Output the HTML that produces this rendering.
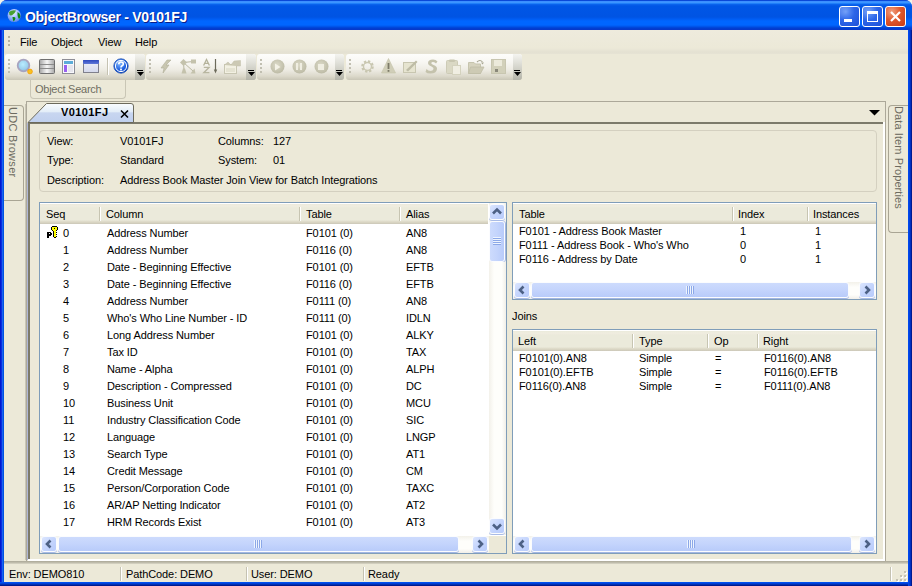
<!DOCTYPE html><html><head><meta charset="utf-8"><style>
*{box-sizing:border-box;margin:0;padding:0}
html,body{width:912px;height:586px;overflow:hidden;background:#f2f4ea}
body{font-family:"Liberation Sans",sans-serif;font-size:11px;color:#000;position:relative}
.a{position:absolute}
.t{position:absolute;white-space:nowrap;line-height:13px;font-size:11px;letter-spacing:-0.1px}
svg{position:absolute;overflow:visible}
</style></head><body>
<div class="a" style="left:0px;top:0px;width:912px;height:586px;background:#0831d9;border-radius:7px 7px 0 0"></div>
<div class="a" style="left:0px;top:0px;width:912px;height:30px;border-radius:7px 7px 0 0;background:linear-gradient(to bottom,#0a48d8 0px,#0a48d8 1px,#3a8cff 1px,#3d95ff 2.5px,#2080fa 3.5px,#0a62ec 4.5px,#0056e6 6px,#0054e3 17px,#005cf2 19px,#0066ff 21px,#0066ff 25px,#0054ea 26.5px,#0040d2 28px,#0836c8 30px)"></div>
<div class="a" style="left:0px;top:30px;width:4px;height:552px;background:linear-gradient(to right,#0019cf 0,#0019cf 1px,#0a2ee0 1px,#0a2ee0 2px,#1864f0 2px,#1864f0 3px,#0052e2 3px)"></div>
<div class="a" style="left:908px;top:30px;width:4px;height:556px;background:linear-gradient(to right,#0048ee 0,#0048ee 1px,#0040dc 1px,#0040dc 2px,#0030c0 2px,#0030c0 3px,#001a90 3px)"></div>
<div class="a" style="left:0px;top:582px;width:908px;height:4px;background:linear-gradient(to bottom,#0050ee 0,#0050ee 1px,#0040d8 1px,#0040d8 2px,#0030b0 2px,#0030b0 3px,#001a90 3px)"></div>
<svg style="left:7px;top:8px" width="15" height="15" viewBox="0 0 15 15"><defs><radialGradient id="gl" cx="0.45" cy="0.3" r="0.75"><stop offset="0" stop-color="#f0f8ff"/><stop offset="0.45" stop-color="#a8c0ff"/><stop offset="1" stop-color="#5080e8"/></radialGradient></defs><circle cx="7.2" cy="7.5" r="6.6" fill="url(#gl)"/><path d="M2 4Q5 1.5 9 2.5Q8 5 6 6.5Q4 8 2.5 7Z" fill="#48a030"/><path d="M10.5 4Q13 5 13.5 8Q13 10.5 12 11Q10.5 9 10.5 7Z" fill="#108810"/><path d="M5.5 9Q8 8.5 8.5 10Q8 13 6.5 13.5Q5.5 11 5.5 9Z" fill="#108810"/></svg>
<span class="t " style="left:25px;top:11px;color:#fff;font-weight:bold;font-size:14px;letter-spacing:-0.3px;text-shadow:1px 1px 0 #0a1e8a">ObjectBrowser - V0101FJ</span>
<div class="a" style="left:839px;top:6px;width:21px;height:21px;border:1px solid #fff;border-radius:3px;background:linear-gradient(135deg,#ffffff22,transparent 40%),radial-gradient(circle at 30% 25%,#6d9cf8 0%,#2d66e8 45%,#1d50d8 100%)"></div>
<div class="a" style="left:862px;top:6px;width:21px;height:21px;border:1px solid #fff;border-radius:3px;background:linear-gradient(135deg,#ffffff22,transparent 40%),radial-gradient(circle at 30% 25%,#6d9cf8 0%,#2d66e8 45%,#1d50d8 100%)"></div>
<div class="a" style="left:885px;top:6px;width:21px;height:21px;border:1px solid #fff;border-radius:3px;background:radial-gradient(circle at 30% 25%,#f0a080 0%,#e0582c 45%,#c83a14 100%)"></div>
<div class="a" style="left:844px;top:19px;width:8px;height:3px;background:#fff"></div>
<div class="a" style="left:867px;top:11px;width:11px;height:11px;border:1px solid #fff;border-top:3px solid #fff"></div>
<svg style="left:889px;top:10px" width="13" height="13" viewBox="0 0 13 13"><path d="M2 2L11 11M11 2L2 11" stroke="#fff" stroke-width="2.2"/></svg>
<div class="a" style="left:4px;top:30px;width:904px;height:552px;background:#ece9d8"></div>
<div class="a" style="left:4px;top:30px;width:904px;height:24px;background:linear-gradient(to bottom,#eeebdd 0px,#ece9d8 18px,#e4e1d2 22px,#e6e3d5 24px)"></div>
<div class="a" style="left:8px;top:36px;width:2px;height:10px;background:repeating-linear-gradient(to bottom,#b5b2a2 0 2px,transparent 2px 4px)"></div>
<span class="t " style="left:20px;top:36px;">File</span>
<span class="t " style="left:51px;top:36px;">Object</span>
<span class="t " style="left:98px;top:36px;">View</span>
<span class="t " style="left:135px;top:36px;">Help</span>
<div class="a" style="left:5px;top:54px;width:140px;height:26px;border-radius:3px;background:linear-gradient(to bottom,#fdfdfb 0%,#f8f7f3 30%,#eeece4 60%,#dcd9cb 85%,#c9c6b6 100%)"></div>
<div class="a" style="left:8px;top:59px;width:2px;height:14px;background:repeating-linear-gradient(to bottom,#c1bfb1 0 2px,transparent 2px 4px)"></div>
<div class="a" style="left:135px;top:54px;width:10px;height:26px;border-radius:0 3px 3px 0;background:linear-gradient(to bottom,#f4f4f0 0%,#dcdcd4 40%,#b4b4a8 100%)"></div>
<div class="a" style="left:137px;top:70px;width:6px;height:1px;background:#000"></div>
<svg style="left:137px;top:72px" width="7" height="4"><path d="M0 0H7L3.5 4Z" fill="#000"/></svg>
<div class="a" style="left:146px;top:54px;width:110px;height:26px;border-radius:3px;background:linear-gradient(to bottom,#fdfdfb 0%,#f8f7f3 30%,#eeece4 60%,#dcd9cb 85%,#c9c6b6 100%)"></div>
<div class="a" style="left:149px;top:59px;width:2px;height:14px;background:repeating-linear-gradient(to bottom,#c1bfb1 0 2px,transparent 2px 4px)"></div>
<div class="a" style="left:246px;top:54px;width:10px;height:26px;border-radius:0 3px 3px 0;background:linear-gradient(to bottom,#f4f4f0 0%,#dcdcd4 40%,#b4b4a8 100%)"></div>
<div class="a" style="left:248px;top:70px;width:6px;height:1px;background:#000"></div>
<svg style="left:248px;top:72px" width="7" height="4"><path d="M0 0H7L3.5 4Z" fill="#000"/></svg>
<div class="a" style="left:257px;top:54px;width:87px;height:26px;border-radius:3px;background:linear-gradient(to bottom,#fdfdfb 0%,#f8f7f3 30%,#eeece4 60%,#dcd9cb 85%,#c9c6b6 100%)"></div>
<div class="a" style="left:260px;top:59px;width:2px;height:14px;background:repeating-linear-gradient(to bottom,#c1bfb1 0 2px,transparent 2px 4px)"></div>
<div class="a" style="left:335px;top:54px;width:9px;height:26px;border-radius:0 3px 3px 0;background:linear-gradient(to bottom,#f4f4f0 0%,#dcdcd4 40%,#b4b4a8 100%)"></div>
<div class="a" style="left:336px;top:70px;width:6px;height:1px;background:#000"></div>
<svg style="left:336px;top:72px" width="7" height="4"><path d="M0 0H7L3.5 4Z" fill="#000"/></svg>
<div class="a" style="left:346px;top:54px;width:176px;height:26px;border-radius:3px;background:linear-gradient(to bottom,#fdfdfb 0%,#f8f7f3 30%,#eeece4 60%,#dcd9cb 85%,#c9c6b6 100%)"></div>
<div class="a" style="left:349px;top:59px;width:2px;height:14px;background:repeating-linear-gradient(to bottom,#c1bfb1 0 2px,transparent 2px 4px)"></div>
<div class="a" style="left:513px;top:54px;width:9px;height:26px;border-radius:0 3px 3px 0;background:linear-gradient(to bottom,#f4f4f0 0%,#dcdcd4 40%,#b4b4a8 100%)"></div>
<div class="a" style="left:514px;top:70px;width:6px;height:1px;background:#000"></div>
<svg style="left:514px;top:72px" width="7" height="4"><path d="M0 0H7L3.5 4Z" fill="#000"/></svg>

<svg style="left:16px;top:58px" width="17" height="17" viewBox="0 0 17 17">
 <defs><radialGradient id="lens" cx="0.45" cy="0.4" r="0.6"><stop offset="0" stop-color="#b8ecff"/><stop offset="0.7" stop-color="#9cd0ec"/><stop offset="1" stop-color="#88b8dc"/></radialGradient></defs>
 <circle cx="7.5" cy="7.5" r="5.8" fill="url(#lens)" stroke="#a8a4c0" stroke-width="1.8"/>
 <circle cx="14" cy="13.5" r="2.4" fill="#f8c020" stroke="#f09800" stroke-width="0.7"/>
</svg>
<svg style="left:39px;top:59px" width="16" height="16" viewBox="0 0 16 16">
 <defs><linearGradient id="db" x1="0" x2="1"><stop offset="0" stop-color="#a4a4a4"/><stop offset="0.5" stop-color="#f6f6f6"/><stop offset="1" stop-color="#a8a8a8"/></linearGradient></defs>
 <rect x="0.5" y="0.5" width="15" height="14" rx="1" fill="url(#db)" stroke="#707070"/>
 <path d="M1 5.5H15M1 9.5H15" stroke="#8a8a8a" stroke-width="1"/>
</svg>
<svg style="left:62px;top:59px" width="13" height="15" viewBox="0 0 13 15">
 <rect x="0.5" y="0.5" width="12" height="14" fill="#f8f8fc" stroke="#8e8e96"/>
 <rect x="2" y="2" width="9" height="3" fill="#5cacd8"/>
 <rect x="2" y="6" width="3" height="7" fill="#9860f0"/>
 <rect x="6" y="6" width="5" height="7" fill="#e6e6ee"/>
</svg>
<svg style="left:83px;top:60px" width="16" height="13" viewBox="0 0 16 13">
 <defs><linearGradient id="wn" x1="0" y1="0" x2="0" y2="1"><stop offset="0" stop-color="#eef0f8"/><stop offset="1" stop-color="#d4d8ec"/></linearGradient>
 <linearGradient id="wt" x1="0" y1="0" x2="0" y2="1"><stop offset="0" stop-color="#2c48c0"/><stop offset="1" stop-color="#6078d8"/></linearGradient></defs>
 <rect x="0.5" y="0.5" width="15" height="12" fill="url(#wn)" stroke="#80808c"/>
 <rect x="0" y="0" width="16" height="4" rx="1" fill="url(#wt)"/>
</svg>
<div class="a" style="left:107px;top:58px;width:1px;height:17px;background:#c5c2b2;box-shadow:1px 0 0 #fff"></div>
<svg style="left:113px;top:58px" width="16" height="16" viewBox="0 0 16 16">
 <defs><radialGradient id="hp" cx="0.4" cy="0.3" r="0.8"><stop offset="0" stop-color="#8cc0ff"/><stop offset="0.6" stop-color="#1a5ce0"/><stop offset="1" stop-color="#0a3cb0"/></radialGradient></defs>
 <circle cx="8" cy="8" r="7.2" fill="url(#hp)" stroke="#2050b0" stroke-width="0.8"/>
 <circle cx="8" cy="8" r="5.6" fill="none" stroke="#fff" stroke-width="1"/>
 <path d="M5.8 6.2Q5.8 4 8 4Q10.3 4 10.3 6Q10.3 7.3 8.8 8Q8 8.5 8 9.6" fill="none" stroke="#fff" stroke-width="1.7"/>
 <rect x="7.1" y="10.6" width="1.8" height="1.8" fill="#fff"/>
</svg>
<svg style="left:160px;top:60px" width="12" height="13" viewBox="0 0 12 13">
 <path d="M7 0L11 0L6 5L9 5L3 13L4 8L1 8Z" fill="#c8c6b0" stroke="#b0ae98" stroke-width="0.6"/>
</svg>
<svg style="left:180px;top:59px" width="16" height="15" viewBox="0 0 16 15">
 <path d="M3.5 3.5L13 2.5M3.5 3.5L13 12M3.5 3.5L4 11" stroke="#bab8a2" stroke-width="1"/>
 <path d="M3.5 0L7 3.5L3.5 7L0 3.5Z" fill="#c4c2ac"/>
 <rect x="11" y="0.5" width="5" height="4" fill="#c4c2ac"/>
 <path d="M1.5 14.5H6.5L5 9.5H3Z" fill="#c4c2ac"/>
 <path d="M10.5 14.5H15.5L14.5 9.5Z" fill="#c4c2ac"/>
</svg>
<svg style="left:203px;top:59px" width="15" height="16" viewBox="0 0 15 16">
 <path d="M0.6 6.5L3.5 0.5L6.4 6.5M1.8 4.3H5.2" fill="none" stroke="#b4b29a" stroke-width="1.3"/>
 <path d="M0.8 8.3H6.2L0.8 13.7H6.4" fill="none" stroke="#b8b6a0" stroke-width="1.3"/>
 <path d="M12.5 0V11.5" stroke="#6c6a5a" stroke-width="1.2"/><path d="M10.8 10.5H14.2L12.5 14.5Z" fill="#6c6a5a"/>
</svg>
<svg style="left:224px;top:60px" width="17" height="14" viewBox="0 0 17 14">
 <rect x="0.5" y="4.5" width="12" height="9" fill="#f2f0e2" stroke="#c8c6b2"/>
 <path d="M0.5 5L4 2L7 5L10 1L16.5 0.5V6L12.5 6" fill="#ccc9b4" stroke="#c0bea8" stroke-width="0.5"/>
 <path d="M2 9H11M2 11H11" stroke="#d0ceba" stroke-width="0.8"/>
</svg>
<svg style="left:270px;top:59px" width="15" height="15" viewBox="0 0 15 15"><defs><radialGradient id="pb277" cx="0.45" cy="0.4" r="0.7"><stop offset="0" stop-color="#dcdac8"/><stop offset="1" stop-color="#b8b6a0"/></radialGradient></defs><circle cx="7.5" cy="7.5" r="7" fill="url(#pb277)"/></svg><svg style="left:292px;top:59px" width="15" height="15" viewBox="0 0 15 15"><defs><radialGradient id="pb299" cx="0.45" cy="0.4" r="0.7"><stop offset="0" stop-color="#dcdac8"/><stop offset="1" stop-color="#b8b6a0"/></radialGradient></defs><circle cx="7.5" cy="7.5" r="7" fill="url(#pb299)"/></svg><svg style="left:314px;top:59px" width="15" height="15" viewBox="0 0 15 15"><defs><radialGradient id="pb321" cx="0.45" cy="0.4" r="0.7"><stop offset="0" stop-color="#dcdac8"/><stop offset="1" stop-color="#b8b6a0"/></radialGradient></defs><circle cx="7.5" cy="7.5" r="7" fill="url(#pb321)"/></svg>
<svg style="left:274px;top:63px" width="7" height="8"><path d="M1 0.5L6.5 4L1 7.5Z" fill="#f4f2e6"/></svg>
<div class="a" style="left:296px;top:63px;width:2px;height:7px;background:#f0eee2"></div>
<div class="a" style="left:300px;top:63px;width:2px;height:7px;background:#f0eee2"></div>
<div class="a" style="left:318px;top:64px;width:6px;height:6px;background:#f0eee2"></div>
<svg style="left:360px;top:59px" width="15" height="15" viewBox="0 0 15 15">
 <circle cx="7.5" cy="7.5" r="5" fill="none" stroke="#c8c6b0" stroke-width="2.6" stroke-dasharray="2.2 1.7"/>
 <circle cx="7.5" cy="7.5" r="4" fill="none" stroke="#cac8b2" stroke-width="1.4"/>
</svg>
<svg style="left:381px;top:58px" width="15" height="16" viewBox="0 0 15 16">
 <path d="M7.5 0.5L14.5 15H0.5Z" fill="#d0ceb8" stroke="#c4c2aa" stroke-width="0.6"/>
 <rect x="6.6" y="5" width="1.8" height="6" fill="#7c7a68"/><rect x="6.6" y="12" width="1.8" height="1.8" fill="#7c7a68"/>
</svg>
<svg style="left:403px;top:59px" width="15" height="15" viewBox="0 0 15 15">
 <rect x="0.5" y="3.5" width="12" height="10" fill="#e6e4d0" stroke="#c8c6b0"/>
 <path d="M3 11L13 1.5L14.5 3L5 12.5Z" fill="#bebca6"/>
</svg>
<svg style="left:425px;top:59px" width="14" height="15" viewBox="0 0 14 15">
 <path d="M12.5 2.5Q11 0.5 8 0.5Q3 0.5 3 4Q3 6 6.5 7.5Q9 8.5 8.5 10Q8 12 5.5 12Q3 12 1.5 10L0.5 13Q2 14.5 5.5 14.5Q11.5 14.5 12 10Q12.3 7.5 8.5 6Q6 5 6.3 4Q6.5 3 8 3Q10 3 11 4.5Z" fill="#c4c2ac"/>
</svg>
<svg style="left:446px;top:59px" width="16" height="16" viewBox="0 0 16 16">
 <rect x="0.5" y="1.5" width="11" height="13" rx="1" fill="#dad8c4" stroke="#cdcbb6"/>
 <rect x="3" y="0.5" width="6" height="2.5" rx="1" fill="#c8c6b0"/>
 <rect x="6.5" y="6.5" width="8" height="9" fill="#f0eee2" stroke="#d4d2be"/>
</svg>
<svg style="left:468px;top:59px" width="17" height="15" viewBox="0 0 17 15">
 <path d="M0.5 3.5H6L7.5 5H12.5V14.5H0.5Z" fill="#d6d3be" stroke="#c6c4ae"/>
 <path d="M2.5 8H16L12.5 14.5H0.5Z" fill="#cdcab4" stroke="#bfbca6" stroke-width="0.8"/>
 <path d="M9 3Q12 0 14.5 3" fill="none" stroke="#a8a692" stroke-width="1.1"/><path d="M13 3.5H16L14.5 5.5Z" fill="#a8a692"/>
</svg>
<svg style="left:491px;top:59px" width="15" height="15" viewBox="0 0 15 15">
 <rect x="0.5" y="0.5" width="14" height="14" fill="#d2d0ba" stroke="#c8c6b0"/>
 <rect x="3" y="1" width="8" height="6" fill="#eceadb"/>
 <rect x="4" y="10" width="3" height="3" fill="#8a887a"/>
</svg>

<div class="a" style="left:30px;top:80px;width:96px;height:19px;border:1px solid #c9c6b5;border-top:none;border-radius:0 0 4px 4px;background:#ece9d8"></div>
<span class="t " style="left:35px;top:83px;color:#6f6d62;letter-spacing:-0.25px">Object Search</span>
<div class="a" style="left:4px;top:105px;width:20px;height:96px;border:1px solid #a9a594;border-left:none;border-radius:0 4px 4px 0;background:#ece9d8"></div>
<div class="a" style="left:4px;top:104px;width:22px;height:456px;border-right:1px solid #c9c6b6"></div>
<div class="a" style="left:6px;top:107px;width:13px;height:80px"><span class="t" style="left:0;top:0;color:#6d6b60;letter-spacing:0.3px;transform-origin:0 0;transform:translate(13px,0) rotate(90deg)">UDC Browser</span></div>
<div class="a" style="left:888px;top:105px;width:20px;height:128px;border:1px solid #a9a594;border-right:none;border-radius:4px 0 0 4px;background:#ece9d8"></div>
<div class="a" style="left:885px;top:101px;width:1px;height:461px;background:#aca899"></div>
<div class="a" style="left:892px;top:106px;width:13px;height:120px"><span class="t" style="left:0;top:0;color:#6d6b60;letter-spacing:0.1px;transform-origin:0 0;transform:translate(13px,0) rotate(90deg)">Data Item Properties</span></div>
<div class="a" style="left:26px;top:101px;width:860px;height:461px;border-top:1px solid #aca899;border-left:1px solid #aca899;border-right:1px solid #aca899;background:#ece9d8"></div>
<div class="a" style="left:28px;top:122px;width:857px;height:2px;background:#7c7a6a"></div>
<div class="a" style="left:28px;top:122px;width:2px;height:438px;background:#7c7a6a"></div>
<div class="a" style="left:27px;top:123px;width:1px;height:437px;background:#b0b8d8"></div>
<div class="a" style="left:883px;top:122px;width:2px;height:438px;background:#fff"></div>
<div class="a" style="left:28px;top:559px;width:857px;height:2px;background:#fff"></div>
<div class="a" style="left:30px;top:124px;width:853px;height:435px;background:#ece9d8"></div>
<svg style="left:27px;top:102px" width="108" height="22" viewBox="0 0 108 22">
<defs><linearGradient id="tabg" x1="0" y1="0" x2="0" y2="1"><stop offset="0" stop-color="#fafdff"/><stop offset="0.42" stop-color="#e4eef8"/><stop offset="0.5" stop-color="#c8d6f0"/><stop offset="1" stop-color="#c0d0ee"/></linearGradient></defs>
<path d="M1 20.5L19.5 1.5H104Q106.5 1.5 106.5 4V20.5Z" fill="url(#tabg)" stroke="#6c6a5c" stroke-width="1"/>
</svg>
<span class="t " style="left:61px;top:106px;font-weight:bold;font-size:11px;letter-spacing:0.4px">V0101FJ</span>
<svg style="left:120px;top:110px" width="9" height="8" viewBox="0 0 9 8"><path d="M1 0.5L8 7.5M8 0.5L1 7.5" stroke="#000" stroke-width="1.6"/></svg>
<svg style="left:869px;top:110px" width="11" height="6"><path d="M0 0H11L5.5 5.5Z" fill="#000"/></svg>
<div class="a" style="left:39px;top:130px;width:838px;height:62px;border:1px solid #d4d0c0;border-radius:4px;background:#ece9d8"></div>
<span class="t " style="left:47px;top:135px;">View:</span>
<span class="t " style="left:47px;top:154px;">Type:</span>
<span class="t " style="left:47px;top:174px;">Description:</span>
<span class="t " style="left:120px;top:135px;">V0101FJ</span>
<span class="t " style="left:120px;top:154px;">Standard</span>
<span class="t " style="left:120px;top:174px;">Address Book Master Join View for Batch Integrations</span>
<span class="t " style="left:218px;top:135px;">Columns:</span>
<span class="t " style="left:273px;top:135px;">127</span>
<span class="t " style="left:218px;top:154px;">System:</span>
<span class="t " style="left:273px;top:154px;">01</span>
<div class="a" style="left:39px;top:202px;width:468px;height:352px;background:#fff;border:1px solid #7f9db9"></div>
<div class="a" style="left:40px;top:203px;width:448px;height:21px;background:linear-gradient(to bottom,#ffffff 0px,#ffffff 1px,#ebeadb 1px,#f0ede0 3px,#ebeadb 5px,#ebeadb 17px,#e2dfce 18px,#d8d4c2 19.5px,#cbc7b8 21px)"></div>
<div class="a" style="left:99px;top:207px;width:1px;height:14px;background:#c7c5b2;box-shadow:1px 0 0 #fff"></div>
<div class="a" style="left:299px;top:207px;width:1px;height:14px;background:#c7c5b2;box-shadow:1px 0 0 #fff"></div>
<div class="a" style="left:399px;top:207px;width:1px;height:14px;background:#c7c5b2;box-shadow:1px 0 0 #fff"></div>
<span class="t " style="left:46px;top:208px;">Seq</span>
<span class="t " style="left:106px;top:208px;">Column</span>
<span class="t " style="left:306px;top:208px;">Table</span>
<span class="t " style="left:406px;top:208px;">Alias</span>
<div class="a" style="left:40px;top:224px;width:449px;height:311px;overflow:hidden">
<span class="t " style="left:23px;top:3px;">0</span>
<span class="t " style="left:67px;top:3px;">Address Number</span>
<span class="t " style="left:266px;top:3px;">F0101 (0)</span>
<span class="t " style="left:366px;top:3px;">AN8</span>
<span class="t " style="left:23px;top:20px;">1</span>
<span class="t " style="left:67px;top:20px;">Address Number</span>
<span class="t " style="left:266px;top:20px;">F0116 (0)</span>
<span class="t " style="left:366px;top:20px;">AN8</span>
<span class="t " style="left:23px;top:37px;">2</span>
<span class="t " style="left:67px;top:37px;">Date - Beginning Effective</span>
<span class="t " style="left:266px;top:37px;">F0101 (0)</span>
<span class="t " style="left:366px;top:37px;">EFTB</span>
<span class="t " style="left:23px;top:54px;">3</span>
<span class="t " style="left:67px;top:54px;">Date - Beginning Effective</span>
<span class="t " style="left:266px;top:54px;">F0116 (0)</span>
<span class="t " style="left:366px;top:54px;">EFTB</span>
<span class="t " style="left:23px;top:71px;">4</span>
<span class="t " style="left:67px;top:71px;">Address Number</span>
<span class="t " style="left:266px;top:71px;">F0111 (0)</span>
<span class="t " style="left:366px;top:71px;">AN8</span>
<span class="t " style="left:23px;top:88px;">5</span>
<span class="t " style="left:67px;top:88px;">Who&#x27;s Who Line Number - ID</span>
<span class="t " style="left:266px;top:88px;">F0111 (0)</span>
<span class="t " style="left:366px;top:88px;">IDLN</span>
<span class="t " style="left:23px;top:105px;">6</span>
<span class="t " style="left:67px;top:105px;">Long Address Number</span>
<span class="t " style="left:266px;top:105px;">F0101 (0)</span>
<span class="t " style="left:366px;top:105px;">ALKY</span>
<span class="t " style="left:23px;top:122px;">7</span>
<span class="t " style="left:67px;top:122px;">Tax ID</span>
<span class="t " style="left:266px;top:122px;">F0101 (0)</span>
<span class="t " style="left:366px;top:122px;">TAX</span>
<span class="t " style="left:23px;top:139px;">8</span>
<span class="t " style="left:67px;top:139px;">Name - Alpha</span>
<span class="t " style="left:266px;top:139px;">F0101 (0)</span>
<span class="t " style="left:366px;top:139px;">ALPH</span>
<span class="t " style="left:23px;top:156px;">9</span>
<span class="t " style="left:67px;top:156px;">Description - Compressed</span>
<span class="t " style="left:266px;top:156px;">F0101 (0)</span>
<span class="t " style="left:366px;top:156px;">DC</span>
<span class="t " style="left:23px;top:173px;">10</span>
<span class="t " style="left:67px;top:173px;">Business Unit</span>
<span class="t " style="left:266px;top:173px;">F0101 (0)</span>
<span class="t " style="left:366px;top:173px;">MCU</span>
<span class="t " style="left:23px;top:190px;">11</span>
<span class="t " style="left:67px;top:190px;">Industry Classification Code</span>
<span class="t " style="left:266px;top:190px;">F0101 (0)</span>
<span class="t " style="left:366px;top:190px;">SIC</span>
<span class="t " style="left:23px;top:207px;">12</span>
<span class="t " style="left:67px;top:207px;">Language</span>
<span class="t " style="left:266px;top:207px;">F0101 (0)</span>
<span class="t " style="left:366px;top:207px;">LNGP</span>
<span class="t " style="left:23px;top:224px;">13</span>
<span class="t " style="left:67px;top:224px;">Search Type</span>
<span class="t " style="left:266px;top:224px;">F0101 (0)</span>
<span class="t " style="left:366px;top:224px;">AT1</span>
<span class="t " style="left:23px;top:241px;">14</span>
<span class="t " style="left:67px;top:241px;">Credit Message</span>
<span class="t " style="left:266px;top:241px;">F0101 (0)</span>
<span class="t " style="left:366px;top:241px;">CM</span>
<span class="t " style="left:23px;top:258px;">15</span>
<span class="t " style="left:67px;top:258px;">Person/Corporation Code</span>
<span class="t " style="left:266px;top:258px;">F0101 (0)</span>
<span class="t " style="left:366px;top:258px;">TAXC</span>
<span class="t " style="left:23px;top:275px;">16</span>
<span class="t " style="left:67px;top:275px;">AR/AP Netting Indicator</span>
<span class="t " style="left:266px;top:275px;">F0101 (0)</span>
<span class="t " style="left:366px;top:275px;">AT2</span>
<span class="t " style="left:23px;top:292px;">17</span>
<span class="t " style="left:67px;top:292px;">HRM Records Exist</span>
<span class="t " style="left:266px;top:292px;">F0101 (0)</span>
<span class="t " style="left:366px;top:292px;">AT3</span>
<span class="t " style="left:23px;top:309px;">18</span>
<span class="t " style="left:67px;top:309px;">Address Line 1</span>
<span class="t " style="left:266px;top:309px;">F0101 (0)</span>
<span class="t " style="left:366px;top:309px;">ADD1</span>
</div>
<svg style="left:46px;top:225px" width="14" height="13" viewBox="0 0 14 13" shape-rendering="crispEdges">
<path d="M1 7h4v1h1v2h-1v1h-2v2h-2z" fill="#000"/><rect x="3" y="8" width="1" height="1" fill="#fff"/>
<path d="M6 1h5v1h1v3h-1v1h-1v1h1v1h-1v1h1v1h-1v1h1v1h-1v1h-2v-1h-1v-6h-1v-1h-1v-3h1z" fill="#000"/>
<path d="M6 2h5v3h-1v1h-1v6h-1v-6h-1v-1h-1z" fill="#ffff00"/><rect x="8" y="3" width="1" height="1" fill="#000"/>
<rect x="9" y="6" width="1" height="6" fill="#ffff00"/>
</svg>
<div class="a" style="left:489px;top:203px;width:17px;height:332px;background:linear-gradient(to right,#f3f1ea,#fefefb 30%,#fefefb 75%,#f1efe8)"></div>
<div class="a" style="left:489px;top:204px;width:16px;height:16px;border-radius:3px;background:#fbfcfe;box-shadow:0 1px 0 #a9bbe6"></div>
<div class="a" style="left:490px;top:205px;width:14px;height:14px;border-radius:2px;background:linear-gradient(135deg,#dce6fe 0%,#c6d6fd 45%,#b8cbfb 100%)"></div>
<svg style="left:492px;top:207px" width="10" height="10" viewBox="0 0 10 10"><path d="M1 6.5L5 2.5L9 6.5" fill="none" stroke="#4d6185" stroke-width="2.6"/></svg>
<div class="a" style="left:489px;top:518px;width:16px;height:16px;border-radius:3px;background:#fbfcfe;box-shadow:0 1px 0 #a9bbe6"></div>
<div class="a" style="left:490px;top:519px;width:14px;height:14px;border-radius:2px;background:linear-gradient(135deg,#dce6fe 0%,#c6d6fd 45%,#b8cbfb 100%)"></div>
<svg style="left:492px;top:521px" width="10" height="10" viewBox="0 0 10 10"><path d="M1 3.5L5 7.5L9 3.5" fill="none" stroke="#4d6185" stroke-width="2.6"/></svg>
<div class="a" style="left:489px;top:221px;width:16px;height:41px;border-radius:3px;background:#fbfcfe;box-shadow:1px 0 0 #a2b6e4"></div>
<div class="a" style="left:490px;top:222px;width:14px;height:39px;border-radius:2px;background:linear-gradient(to right,#cddbfd 0%,#c4d4fc 50%,#b8cbfa 100%)"></div>
<div class="a" style="left:493px;top:237px;width:8px;height:8px;background:repeating-linear-gradient(to bottom,#eef4fe 0 1px,#8ca8e8 1px 2px)"></div>
<div class="a" style="left:40px;top:536px;width:449px;height:17px;background:linear-gradient(to bottom,#f3f1ea,#fefefb 30%,#fefefb 75%,#f1efe8)"></div>
<div class="a" style="left:41px;top:536px;width:16px;height:16px;border-radius:3px;background:#fbfcfe;box-shadow:0 1px 0 #a9bbe6"></div>
<div class="a" style="left:42px;top:537px;width:14px;height:14px;border-radius:2px;background:linear-gradient(135deg,#dce6fe 0%,#c6d6fd 45%,#b8cbfb 100%)"></div>
<svg style="left:44px;top:539px" width="10" height="10" viewBox="0 0 10 10"><path d="M6.5 1.5L3 5L6.5 8.5" fill="none" stroke="#4d6185" stroke-width="2.6"/></svg>
<div class="a" style="left:472px;top:536px;width:16px;height:16px;border-radius:3px;background:#fbfcfe;box-shadow:0 1px 0 #a9bbe6"></div>
<div class="a" style="left:473px;top:537px;width:14px;height:14px;border-radius:2px;background:linear-gradient(135deg,#dce6fe 0%,#c6d6fd 45%,#b8cbfb 100%)"></div>
<svg style="left:475px;top:539px" width="10" height="10" viewBox="0 0 10 10"><path d="M3.5 1.5L7 5L3.5 8.5" fill="none" stroke="#4d6185" stroke-width="2.6"/></svg>
<div class="a" style="left:58px;top:536px;width:401px;height:16px;border-radius:3px;background:#fbfcfe;box-shadow:0 1px 0 #a2b6e4"></div>
<div class="a" style="left:59px;top:537px;width:399px;height:14px;border-radius:2px;background:linear-gradient(to bottom,#cddbfd 0%,#c4d4fc 50%,#b8cbfa 100%)"></div>
<div class="a" style="left:254px;top:540px;width:8px;height:8px;background:repeating-linear-gradient(to right,#eef4fe 0 1px,#8ca8e8 1px 2px)"></div>
<div class="a" style="left:489px;top:536px;width:17px;height:17px;background:#ece9d8"></div>
<div class="a" style="left:512px;top:202px;width:365px;height:98px;background:#fff;border:1px solid #7f9db9"></div>
<div class="a" style="left:513px;top:203px;width:363px;height:21px;background:linear-gradient(to bottom,#ffffff 0px,#ffffff 1px,#ebeadb 1px,#f0ede0 3px,#ebeadb 5px,#ebeadb 17px,#e2dfce 18px,#d8d4c2 19.5px,#cbc7b8 21px)"></div>
<div class="a" style="left:732px;top:207px;width:1px;height:14px;background:#c7c5b2;box-shadow:1px 0 0 #fff"></div>
<div class="a" style="left:807px;top:207px;width:1px;height:14px;background:#c7c5b2;box-shadow:1px 0 0 #fff"></div>
<span class="t " style="left:519px;top:208px;">Table</span>
<span class="t " style="left:738px;top:208px;">Index</span>
<span class="t " style="left:813px;top:208px;">Instances</span>
<span class="t " style="left:519px;top:225px;">F0101 - Address Book Master</span>
<span class="t " style="left:740px;top:225px;">1</span>
<span class="t " style="left:815px;top:225px;">1</span>
<span class="t " style="left:519px;top:239px;">F0111 - Address Book - Who&#x27;s Who</span>
<span class="t " style="left:740px;top:239px;">0</span>
<span class="t " style="left:815px;top:239px;">1</span>
<span class="t " style="left:519px;top:253px;">F0116 - Address by Date</span>
<span class="t " style="left:740px;top:253px;">0</span>
<span class="t " style="left:815px;top:253px;">1</span>
<div class="a" style="left:513px;top:282px;width:363px;height:17px;background:linear-gradient(to bottom,#f3f1ea,#fefefb 30%,#fefefb 75%,#f1efe8)"></div>
<div class="a" style="left:514px;top:282px;width:16px;height:16px;border-radius:3px;background:#fbfcfe;box-shadow:0 1px 0 #a9bbe6"></div>
<div class="a" style="left:515px;top:283px;width:14px;height:14px;border-radius:2px;background:linear-gradient(135deg,#dce6fe 0%,#c6d6fd 45%,#b8cbfb 100%)"></div>
<svg style="left:517px;top:285px" width="10" height="10" viewBox="0 0 10 10"><path d="M6.5 1.5L3 5L6.5 8.5" fill="none" stroke="#4d6185" stroke-width="2.6"/></svg>
<div class="a" style="left:859px;top:282px;width:16px;height:16px;border-radius:3px;background:#fbfcfe;box-shadow:0 1px 0 #a9bbe6"></div>
<div class="a" style="left:860px;top:283px;width:14px;height:14px;border-radius:2px;background:linear-gradient(135deg,#dce6fe 0%,#c6d6fd 45%,#b8cbfb 100%)"></div>
<svg style="left:862px;top:285px" width="10" height="10" viewBox="0 0 10 10"><path d="M3.5 1.5L7 5L3.5 8.5" fill="none" stroke="#4d6185" stroke-width="2.6"/></svg>
<div class="a" style="left:531px;top:282px;width:318px;height:16px;border-radius:3px;background:#fbfcfe;box-shadow:0 1px 0 #a2b6e4"></div>
<div class="a" style="left:532px;top:283px;width:316px;height:14px;border-radius:2px;background:linear-gradient(to bottom,#cddbfd 0%,#c4d4fc 50%,#b8cbfa 100%)"></div>
<div class="a" style="left:686px;top:286px;width:8px;height:8px;background:repeating-linear-gradient(to right,#eef4fe 0 1px,#8ca8e8 1px 2px)"></div>
<span class="t " style="left:512px;top:310px;">Joins</span>
<div class="a" style="left:512px;top:329px;width:365px;height:225px;background:#fff;border:1px solid #7f9db9"></div>
<div class="a" style="left:513px;top:330px;width:363px;height:21px;background:linear-gradient(to bottom,#ffffff 0px,#ffffff 1px,#ebeadb 1px,#f0ede0 3px,#ebeadb 5px,#ebeadb 17px,#e2dfce 18px,#d8d4c2 19.5px,#cbc7b8 21px)"></div>
<div class="a" style="left:632px;top:334px;width:1px;height:14px;background:#c7c5b2;box-shadow:1px 0 0 #fff"></div>
<div class="a" style="left:707px;top:334px;width:1px;height:14px;background:#c7c5b2;box-shadow:1px 0 0 #fff"></div>
<div class="a" style="left:757px;top:334px;width:1px;height:14px;background:#c7c5b2;box-shadow:1px 0 0 #fff"></div>
<span class="t " style="left:518px;top:335px;">Left</span>
<span class="t " style="left:639px;top:335px;">Type</span>
<span class="t " style="left:714px;top:335px;">Op</span>
<span class="t " style="left:763px;top:335px;">Right</span>
<span class="t " style="left:519px;top:352px;">F0101(0).AN8</span>
<span class="t " style="left:639px;top:352px;">Simple</span>
<span class="t " style="left:715px;top:352px;">=</span>
<span class="t " style="left:764px;top:352px;">F0116(0).AN8</span>
<span class="t " style="left:519px;top:366px;">F0101(0).EFTB</span>
<span class="t " style="left:639px;top:366px;">Simple</span>
<span class="t " style="left:715px;top:366px;">=</span>
<span class="t " style="left:764px;top:366px;">F0116(0).EFTB</span>
<span class="t " style="left:519px;top:380px;">F0116(0).AN8</span>
<span class="t " style="left:639px;top:380px;">Simple</span>
<span class="t " style="left:715px;top:380px;">=</span>
<span class="t " style="left:764px;top:380px;">F0111(0).AN8</span>
<div class="a" style="left:513px;top:536px;width:363px;height:17px;background:linear-gradient(to bottom,#f3f1ea,#fefefb 30%,#fefefb 75%,#f1efe8)"></div>
<div class="a" style="left:514px;top:536px;width:16px;height:16px;border-radius:3px;background:#fbfcfe;box-shadow:0 1px 0 #a9bbe6"></div>
<div class="a" style="left:515px;top:537px;width:14px;height:14px;border-radius:2px;background:linear-gradient(135deg,#dce6fe 0%,#c6d6fd 45%,#b8cbfb 100%)"></div>
<svg style="left:517px;top:539px" width="10" height="10" viewBox="0 0 10 10"><path d="M6.5 1.5L3 5L6.5 8.5" fill="none" stroke="#4d6185" stroke-width="2.6"/></svg>
<div class="a" style="left:859px;top:536px;width:16px;height:16px;border-radius:3px;background:#fbfcfe;box-shadow:0 1px 0 #a9bbe6"></div>
<div class="a" style="left:860px;top:537px;width:14px;height:14px;border-radius:2px;background:linear-gradient(135deg,#dce6fe 0%,#c6d6fd 45%,#b8cbfb 100%)"></div>
<svg style="left:862px;top:539px" width="10" height="10" viewBox="0 0 10 10"><path d="M3.5 1.5L7 5L3.5 8.5" fill="none" stroke="#4d6185" stroke-width="2.6"/></svg>
<div class="a" style="left:531px;top:536px;width:321px;height:16px;border-radius:3px;background:#fbfcfe;box-shadow:0 1px 0 #a2b6e4"></div>
<div class="a" style="left:532px;top:537px;width:319px;height:14px;border-radius:2px;background:linear-gradient(to bottom,#cddbfd 0%,#c4d4fc 50%,#b8cbfa 100%)"></div>
<div class="a" style="left:687px;top:540px;width:8px;height:8px;background:repeating-linear-gradient(to right,#eef4fe 0 1px,#8ca8e8 1px 2px)"></div>
<div class="a" style="left:4px;top:563px;width:904px;height:19px;background:#ece9d8"></div>
<div class="a" style="left:4px;top:561px;width:904px;height:3px;background:linear-gradient(to bottom,#aaa797,#c2bfae 60%,#dcd9c9)"></div>
<div class="a" style="left:120px;top:567px;width:1px;height:14px;background:#c5c2b2;box-shadow:1px 0 0 #fff"></div>
<div class="a" style="left:246px;top:567px;width:1px;height:14px;background:#c5c2b2;box-shadow:1px 0 0 #fff"></div>
<div class="a" style="left:363px;top:567px;width:1px;height:14px;background:#c5c2b2;box-shadow:1px 0 0 #fff"></div>
<div class="a" style="left:890px;top:567px;width:1px;height:14px;background:#c5c2b2;box-shadow:1px 0 0 #fff"></div>
<span class="t " style="left:9px;top:568px;">Env: DEMO810</span>
<span class="t " style="left:126px;top:568px;">PathCode: DEMO</span>
<span class="t " style="left:251px;top:568px;">User: DEMO</span>
<span class="t " style="left:368px;top:568px;">Ready</span>
<div class="a" style="left:904px;top:571px;width:2px;height:2px;background:#c5c2b2;box-shadow:1px 1px 0 #fff"></div>
<div class="a" style="left:904px;top:575px;width:2px;height:2px;background:#c5c2b2;box-shadow:1px 1px 0 #fff"></div>
<div class="a" style="left:900px;top:575px;width:2px;height:2px;background:#c5c2b2;box-shadow:1px 1px 0 #fff"></div>
<div class="a" style="left:904px;top:579px;width:2px;height:2px;background:#c5c2b2;box-shadow:1px 1px 0 #fff"></div>
<div class="a" style="left:900px;top:579px;width:2px;height:2px;background:#c5c2b2;box-shadow:1px 1px 0 #fff"></div>
<div class="a" style="left:896px;top:579px;width:2px;height:2px;background:#c5c2b2;box-shadow:1px 1px 0 #fff"></div>
</body></html>
